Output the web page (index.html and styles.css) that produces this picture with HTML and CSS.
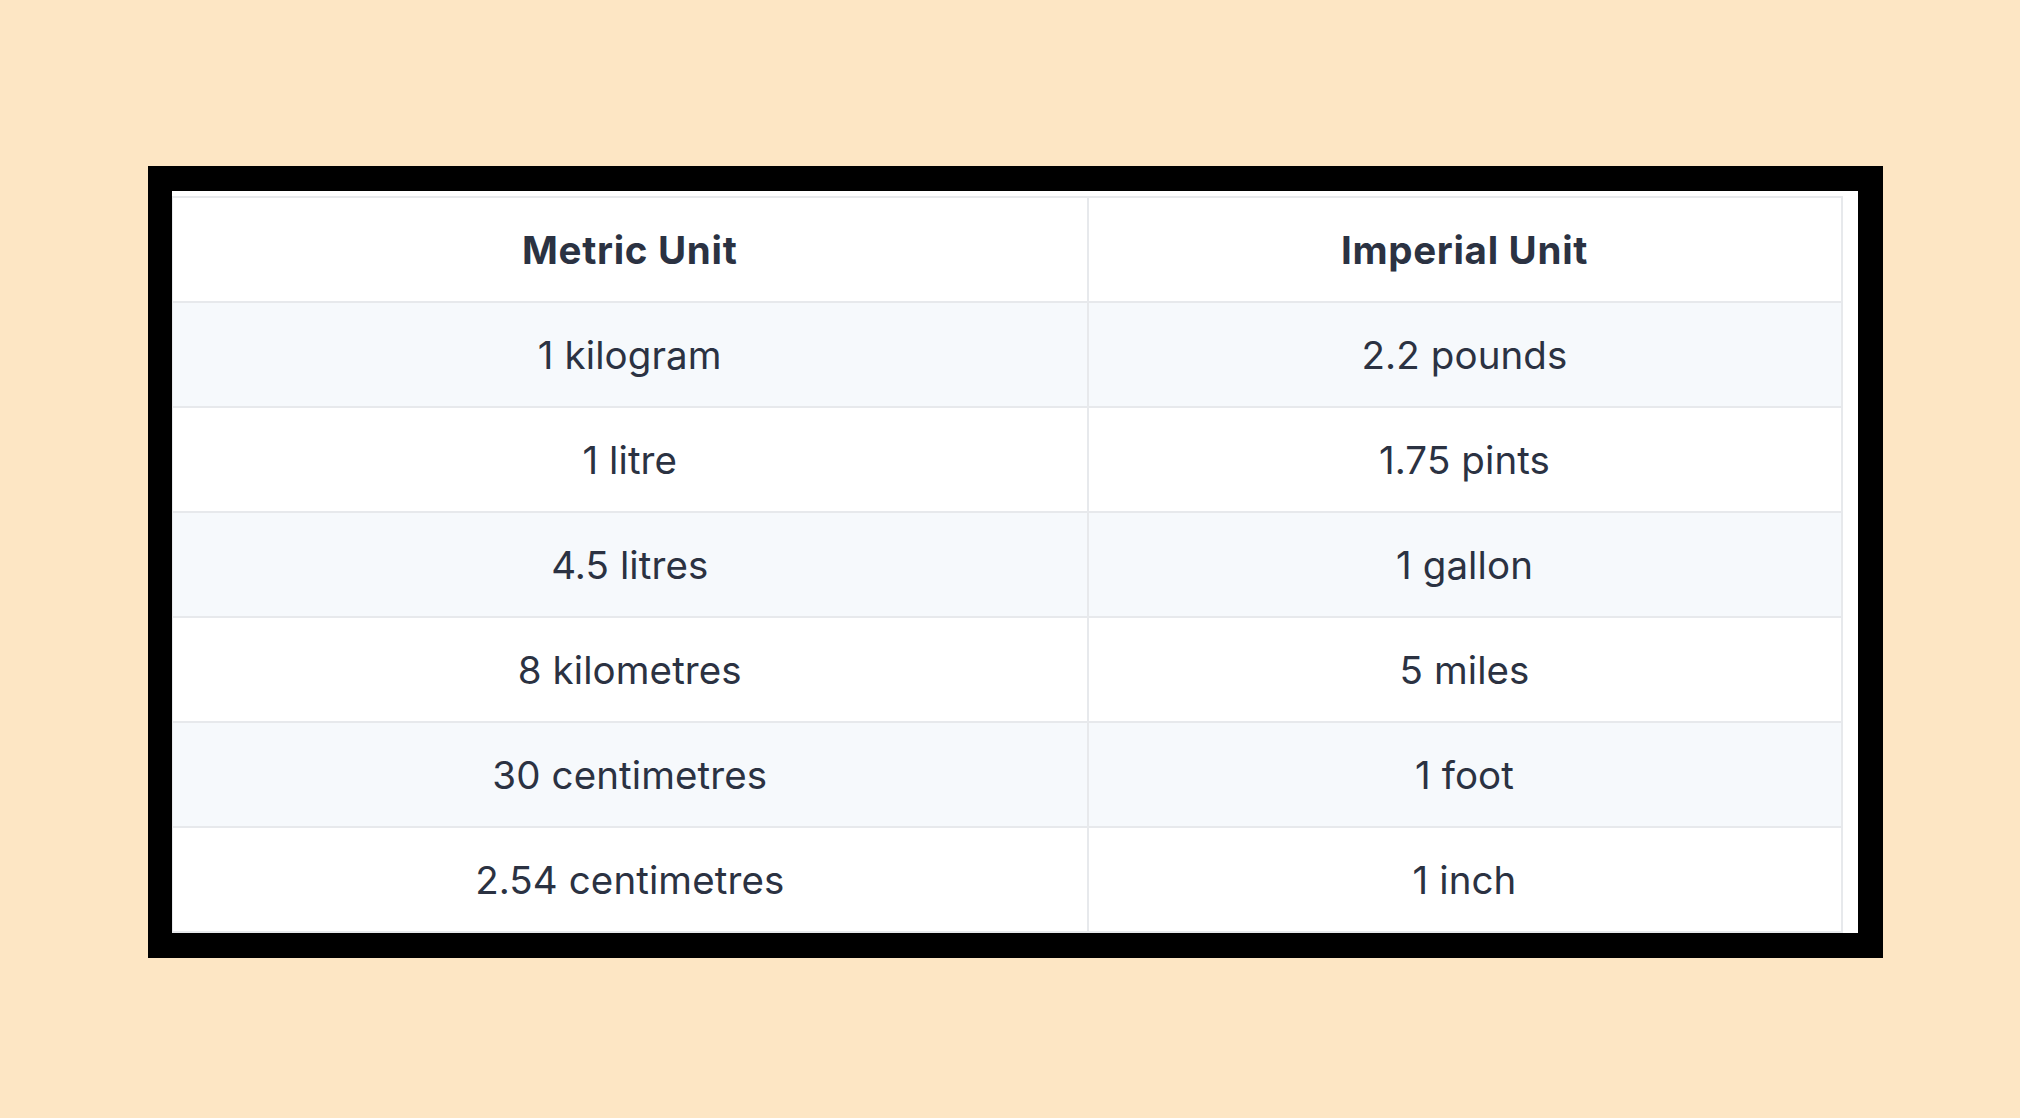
FILE: index.html
```html
<!DOCTYPE html>
<html lang="en">
<head>
<meta charset="utf-8">
<title>Metric to Imperial</title>
<link rel="stylesheet" href="styles.css">
</head>
<body>
<div class="page">
  <div class="frame">
    <div class="sheet">
      <table class="units">
        <colgroup>
          <col class="col-metric">
          <col class="col-imperial">
        </colgroup>
        <thead>
          <tr><th>Metric Unit</th><th>Imperial Unit</th></tr>
        </thead>
        <tbody>
          <tr><td>1 kilogram</td><td>2.2 pounds</td></tr>
          <tr><td>1 litre</td><td>1.75 pints</td></tr>
          <tr><td>4.5 litres</td><td>1 gallon</td></tr>
          <tr><td>8 kilometres</td><td>5 miles</td></tr>
          <tr><td>30 centimetres</td><td>1 foot</td></tr>
          <tr><td>2.54 centimetres</td><td>1 inch</td></tr>
        </tbody>
      </table>
    </div>
  </div>
</div>
</body>
</html>
```
FILE: styles.css
```css
html, body {
  margin: 0;
  padding: 0;
  background: #fde6c4;
}
body {
  width: 2020px;
  height: 1118px;
  overflow: hidden;
  font-family: Inter, "Noto Sans", sans-serif;
  color: #2b3242;
}
.page {
  padding: 166px 0 0 148px;
}
.frame {
  width: 1735px;
  box-sizing: border-box;
  background: #000;
  padding: 25px 25px 25px 24px;
}
.sheet {
  background: #fff;
  height: 742px;
  box-sizing: border-box;
  padding: 5px 17px 0 0;
}
.units {
  width: 1669px;
  table-layout: fixed;
  border-collapse: collapse;
}
.col-metric { width: 915px; }
.col-imperial { width: 754px; }
.units th,
.units td {
  border: 2px solid #e7e9ec;
  padding: 25px 10px 23px;
  line-height: 55px;
  font-size: 38.5px;
  text-align: center;
}
.units th {
  font-weight: 700;
  letter-spacing: 0.7px;
  background: #fff;
}
.units td {
  font-weight: 400;
  letter-spacing: 0.1px;
}
.units tbody tr:nth-child(odd) td {
  background: #f6f9fc;
}
.units tbody tr:nth-child(even) td {
  background: #fff;
}
.units tr > :first-child {
  border-left-width: 1px;
}
```
